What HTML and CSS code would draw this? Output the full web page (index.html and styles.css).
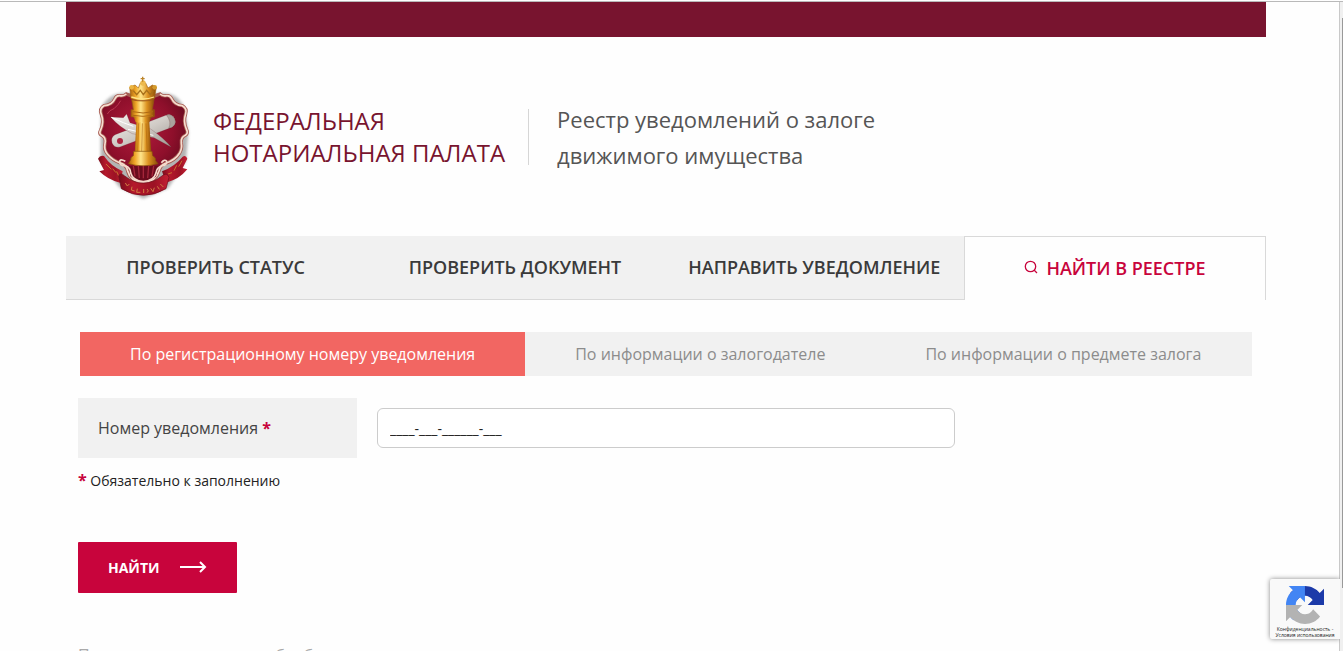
FILE: index.html
```html
<!DOCTYPE html>
<html lang="ru">
<head>
<meta charset="utf-8">
<title>Реестр уведомлений о залоге движимого имущества</title>
<link rel="stylesheet" href="styles.css">
</head>
<body>
<div class="page">
  <div class="topbar"></div>
  <header class="header">
    <svg class="emblem" viewBox="0 0 390 435" aria-hidden="true">
      <defs>
        <linearGradient id="gold" x1="0" x2="1" y1="0" y2="0">
          <stop offset="0" stop-color="#a8600c"/><stop offset=".22" stop-color="#f0a728"/>
          <stop offset=".42" stop-color="#ffe58a"/><stop offset=".68" stop-color="#dc9220"/>
          <stop offset="1" stop-color="#8a4a08"/>
        </linearGradient>
        <radialGradient id="field" cx=".45" cy=".4" r=".65">
          <stop offset="0" stop-color="#b31c3c"/><stop offset=".6" stop-color="#8e0f2b"/>
          <stop offset="1" stop-color="#5c0a1c"/>
        </radialGradient>
        <linearGradient id="ribbon" x1="0" x2="1" y1="0" y2="0">
          <stop offset="0" stop-color="#7a0c1c"/><stop offset=".3" stop-color="#b5182c"/>
          <stop offset=".7" stop-color="#9c1224"/><stop offset="1" stop-color="#c42034"/>
        </linearGradient>
        <linearGradient id="steel" x1="0" x2="1" y1="0" y2="1">
          <stop offset="0" stop-color="#f6f3f0"/><stop offset=".5" stop-color="#d0cbc6"/>
          <stop offset="1" stop-color="#9c9690"/>
        </linearGradient>
        <filter id="soft" x="-20%" y="-20%" width="140%" height="140%"><feGaussianBlur stdDeviation="5"/></filter>
      </defs>
      <path d="M64 130Q90 84 138 88H240Q292 84 312 130L325 205 318 290 265 372 190 404 118 370 62 292 62 200Z" fill="#777" opacity=".55" filter="url(#soft)"/>
      <path d="M54 284Q60 272 72 276Q92 306 128 322L120 356Q84 348 58 322L72 318Z" fill="url(#ribbon)"/>
      <path d="M322 284Q318 272 308 278Q286 306 246 322L258 356Q298 346 322 316L308 312Z" fill="url(#ribbon)"/>
      <path d="M78 300L94 316M98 314L108 326M110 322L116 336M264 330L276 326M282 320L290 304M296 308L306 290" stroke="#c8702f" stroke-width="3" fill="none"/>
      <path d="M139 90Q130 98 119 95Q109 94 105 104Q96 124 72 125Q57 134 64 151Q73 174 62 198Q56 209 65 214Q79 221 75 239Q71 257 82 270Q98 290 124 298Q140 304 143 321Q151 352 190 357Q228 352 237 321Q241 303 257 298Q286 288 299 267Q307 253 304 237Q302 220 316 214Q326 208 319 195Q309 172 317 149Q322 134 307 125Q284 124 275 104Q270 94 260 95Q249 98 240 90Q190 112 139 90Z" fill="url(#field)" stroke="#a65b52" stroke-width="10"/>
      <path d="M139 90Q130 98 119 95Q109 94 105 104Q96 124 72 125Q57 134 64 151Q73 174 62 198Q56 209 65 214Q79 221 75 239Q71 257 82 270Q98 290 124 298Q140 304 143 321Q151 352 190 357Q228 352 237 321Q241 303 257 298Q286 288 299 267Q307 253 304 237Q302 220 316 214Q326 208 319 195Q309 172 317 149Q322 134 307 125Q284 124 275 104Q270 94 260 95Q249 98 240 90" fill="none" stroke="#f7ddd0" stroke-width="5"/>
      <path d="M82 150Q88 138 102 134Q116 122 122 110" fill="none" stroke="#d45468" stroke-width="3" opacity=".6"/>
      <path d="M146 306L152 338Q190 362 228 338L236 306Z" fill="#6a0b1d"/>
      <path d="M160 306L165 337M175 306L178 342M190 306V343M206 306L203 342M221 306L216 337" stroke="#a5263a" stroke-width="4"/>
      <path d="M136 292Q118 282 119 295Q122 307 138 306Q152 312 152 327Q158 350 190 353Q222 350 228 327Q230 311 244 306Q262 304 260 292Q254 284 244 296" fill="none" stroke="#f5d9cc" stroke-width="5"/>
      <g stroke="#5c1420" stroke-opacity=".3" stroke-width="2">
        <path d="M105 212L259 153Q274 148 283 163Q292 180 276 190L120 249Q103 253 96 237Q91 220 105 212Z" fill="url(#steel)"/>
        <path d="M259 153Q274 148 283 163Q292 180 276 190L266 193Q276 174 259 153Z" fill="#aaa39d"/>
        <path d="M92 159L130 161 140 150 150 176 212 195Q254 224 274 250L222 221 157 209Q118 190 92 159Z" fill="url(#steel)"/>
      </g>
      <path d="M94 160L130 176 160 187M144 196L220 214" stroke="#fff" stroke-width="3" fill="none"/>
      <circle cx="120" cy="231" r="9" fill="#ae2440"/>
      <path d="M169 174H208L214 270H164Z" fill="url(#gold)"/>
      <path d="M176 178L173 267M187 178L185 268M198 178L202 267" stroke="#b26b10" stroke-width="2"/>
      <path d="M161 262H216L218 275Q229 281 227 290L234 299Q190 312 145 299L152 287Q151 279 160 275Z" fill="url(#gold)" stroke="#85500c" stroke-width="2"/>
      <path d="M155 107Q190 116 222 106L217 137H223V158Q190 166 153 158V137H160Z" fill="url(#gold)" stroke="#965810" stroke-width="2"/>
      <path d="M158 143Q190 151 219 143M158 154Q190 160 219 154" fill="none" stroke="#ae6913" stroke-width="3"/>
      <path d="M161 159H214L208 175H167Z" fill="url(#gold)"/>
      <path d="M153 104L149 70 165 63 175 72 181 57Q189 49 197 57L204 72 217 63 229 70 223 104Q190 115 153 104Z" fill="url(#gold)" stroke="#a16716" stroke-width="2"/>
      <path d="M160 80L170 92 181 79 190 92 200 79 211 92 220 80" fill="none" stroke="#a8701a" stroke-width="4"/>
      <path d="M154 99Q190 111 222 99" fill="none" stroke="#ffe385" stroke-width="4"/>
      <circle cx="155" cy="70" r="7" fill="#eab442"/><circle cx="224" cy="70" r="7" fill="#d39a2c"/>
      <circle cx="189" cy="57" r="8" fill="#edba4e"/>
      <path d="M188 38V53M182 44H194" stroke="#bc8428" stroke-width="4"/>
      <path d="M116 335Q122 324 134 336Q190 380 250 333Q262 326 267 340L258 374Q190 414 124 374Z" fill="url(#ribbon)" stroke="#6b0c1a" stroke-width="2"/>
      <path d="M136 357L142 366 148 360M156 368L154 378 164 381M172 374L170 385H181M191 375V387M201 375Q209 381 201 386M212 373L219 383 223 371M232 367L238 376M241 360L250 369" stroke="#cf7f42" stroke-width="3" fill="none"/>
    </svg>
    <a class="brand" href="#">ФЕДЕРАЛЬНАЯ<br>НОТАРИАЛЬНАЯ ПАЛАТА</a>
    <p class="subtitle">Реестр уведомлений о залоге<br>движимого имущества</p>
  </header>

  <nav class="tabs">
    <a class="tab" href="#">ПРОВЕРИТЬ СТАТУС</a>
    <a class="tab" href="#">ПРОВЕРИТЬ ДОКУМЕНТ</a>
    <a class="tab" href="#">НАПРАВИТЬ УВЕДОМЛЕНИЕ</a>
    <a class="tab tab-active" href="#">
      <svg class="search-icon" viewBox="0 0 14 16" aria-hidden="true"><circle cx="6.500" cy="6.500" r="5.200"/><path d="M10 10L13 13"/></svg>
      НАЙТИ В РЕЕСТРЕ
    </a>
  </nav>

  <main class="content">
    <nav class="subtabs">
      <a class="subtab subtab-active" href="#">По регистрационному номеру уведомления</a>
      <a class="subtab" href="#">По информации о залогодателе</a>
      <a class="subtab" href="#">По информации о предмете залога</a>
    </nav>
    <form class="form">
      <div class="field">
        <label class="field-label" for="number">Номер уведомления <span class="star">*</span></label>
        <input class="field-input" id="number" type="text" value="____-___-______-___">
      </div>
      <p class="required"><span class="star">*</span> Обязательно к заполнению</p>
      <button class="submit" type="button">НАЙТИ
        <svg class="arrow" viewBox="0 0 27 14" aria-hidden="true"><path d="M0 6H25M20 1L25 6L20 11"/></svg>
      </button>
    </form>
    <a class="policy" href="#">Политика в отношении обработки</a>
  </main>
</div>
<div class="scrollbar"><div class="thumb"></div></div>
<aside class="captcha">
  <svg class="captcha-logo" viewBox="0 0 64 64" aria-hidden="true">
    <path d="M64 32V4.700L56.800 11.800C50.900 4.700 42 .1 32 .1C21.600 .1 12.400 5 6.500 12.700L18.300 24.600A15.500 15.500 0 0 1 23 19.300C25 17.700 28 16.400 32 16.400C37.500 16.400 42 19.500 44.900 23.600L36.600 31.900Z" fill="#1c3aa9"/>
    <path d="M31.900 .1H4.600L11.800 7.300C4.600 13.100 0 22.100 0 32.100C0 42.500 5 51.700 12.600 57.500L24.500 45.800A15.500 15.500 0 0 1 19.200 41C17.600 39 16.300 36.100 16.300 32.100C16.300 26.500 19.500 22 23.500 19.100L31.900 27.400Z" fill="#4285f4"/>
    <path d="M0 32V59.200L7.200 52.100C13.100 59.200 22 63.800 32 63.800C42.400 63.800 51.600 58.900 57.400 51.200L45.700 39.300A15.500 15.500 0 0 1 41 44.600C38.900 46.200 36 47.500 32 47.500C26.500 47.500 21.900 44.400 19 40.300L27.300 32Z" fill="#b3b3b3"/>
  </svg>
  <div class="captcha-text"><a href="#">Конфиденциальность</a> -<br><a href="#">Условия использования</a></div>
</aside>
</body>
</html>
```
FILE: styles.css
```css
* { box-sizing: border-box; }

html { height: 100%; overflow: hidden; }

body {
  margin: 0;
  height: 100%;
  overflow: hidden;
  position: relative;
  padding-right: 11px;
  background: #fefefe;
  color: #222;
  font-family: "Open Sans", "Noto Sans", sans-serif;
  font-size: 16px;
}

body::before {
  content: "";
  position: absolute;
  inset: 0 0 auto;
  height: 1px;
  border-bottom: 1px solid #b9b9b9;
}

a { color: inherit; text-decoration: none; }
p { margin: 0; }

.page { max-width: 1200px; margin: 0 auto; padding-top: 2px; }
.topbar { height: 35px; background: #78142f; }

.header {
  display: flex;
  align-items: center;
  height: 199px;
  padding: 0 14px;
}
.emblem { width: 130px; height: 145px; flex: none; }
.brand {
  margin-left: 3px;
  padding-right: 23px;
  color: #78142f;
  font-size: 24px;
  line-height: 32px;
  white-space: nowrap;
}
.subtitle {
  display: flex;
  align-items: center;
  height: 56px;
  padding-left: 28px;
  border-left: 1px solid #d6d6d6;
  color: #555;
  font-size: 22px;
  line-height: 36px;
}

.tabs { display: flex; height: 64px; }
.tab {
  flex: 1;
  display: flex;
  align-items: center;
  justify-content: center;
  padding-bottom: 2px;
  background: #f1f1f1;
  border-bottom: 1px solid #d9d9d9;
  color: #3a3a3a;
  font-size: 18px;
  font-weight: 600;
  white-space: nowrap;
}
.tab-active {
  flex: 0 0 302px;
  gap: 8px;
  background: #fefefe;
  border: 1px solid #d9d9d9;
  border-bottom: 0;
  color: #c8043c;
}
.search-icon {
  width: 14px;
  height: 16px;
  fill: none;
  stroke: currentColor;
  stroke-width: 1.3;
}

.content { padding: 32px 12px 0; }
.subtabs {
  display: flex;
  height: 44px;
  margin: 0 2px 22px;
  background: #f1f1f1;
}
.subtab {
  display: flex;
  align-items: center;
  padding: 0 50px;
  color: #8c8c8c;
  white-space: nowrap;
}
.subtab-active { background: #f26662; color: #fff; }

.field { display: flex; align-items: center; gap: 20px; }
.field-label {
  flex: 0 0 279px;
  padding: 0 20px;
  background: #f1f1f1;
  color: #444;
  line-height: 60px;
}
.star { color: #c8043c; font-size: 16px; font-weight: 700; }
.field-input {
  flex: 0 1 578px;
  min-width: 0;
  height: 40px;
  padding: 0 12px;
  border: 1px solid #ccc;
  border-radius: 6px;
  background: #fff;
  color: #222;
  font: inherit;
  font-size: 14px;
}
.required { margin-top: 10px; font-size: 14px; line-height: 24px; }

.submit {
  display: flex;
  align-items: center;
  gap: 20px;
  height: 51px;
  margin-top: 49px;
  padding: 0 30px;
  border: 0;
  border-radius: 1px;
  background: #c8043c;
  color: #fff;
  font: inherit;
  font-size: 14px;
  font-weight: 700;
}
.arrow { width: 27px; height: 14px; fill: none; stroke: #fff; stroke-width: 2; }

.policy {
  display: block;
  margin-top: 50px;
  color: #aaa;
  line-height: 24px;
}

.scrollbar {
  position: absolute;
  top: 2px;
  right: 0;
  bottom: 0;
  width: 4px;
  border-left: 1px solid #c9c9c9;
  background: #f0f0f0;
}
.thumb { width: 1px; height: 570px; margin: 16px 0 0 auto; background: #999; }

.captcha {
  position: absolute;
  right: 3px;
  bottom: 12px;
  width: 70px;
  height: 60px;
  padding-top: 7px;
  background: #f9f9f9;
  border-radius: 2px 0 0 2px;
  box-shadow: 0 0 5px #888;
  text-align: center;
  clip-path: inset(-8px 0 -8px -8px);
}
.captcha-logo { display: block; width: 38px; height: 38px; margin: 0 auto; }
.captcha-text {
  margin-top: 2px;
  color: #222;
  font-size: 5px;
  line-height: 6px;
  white-space: nowrap;
}
```
